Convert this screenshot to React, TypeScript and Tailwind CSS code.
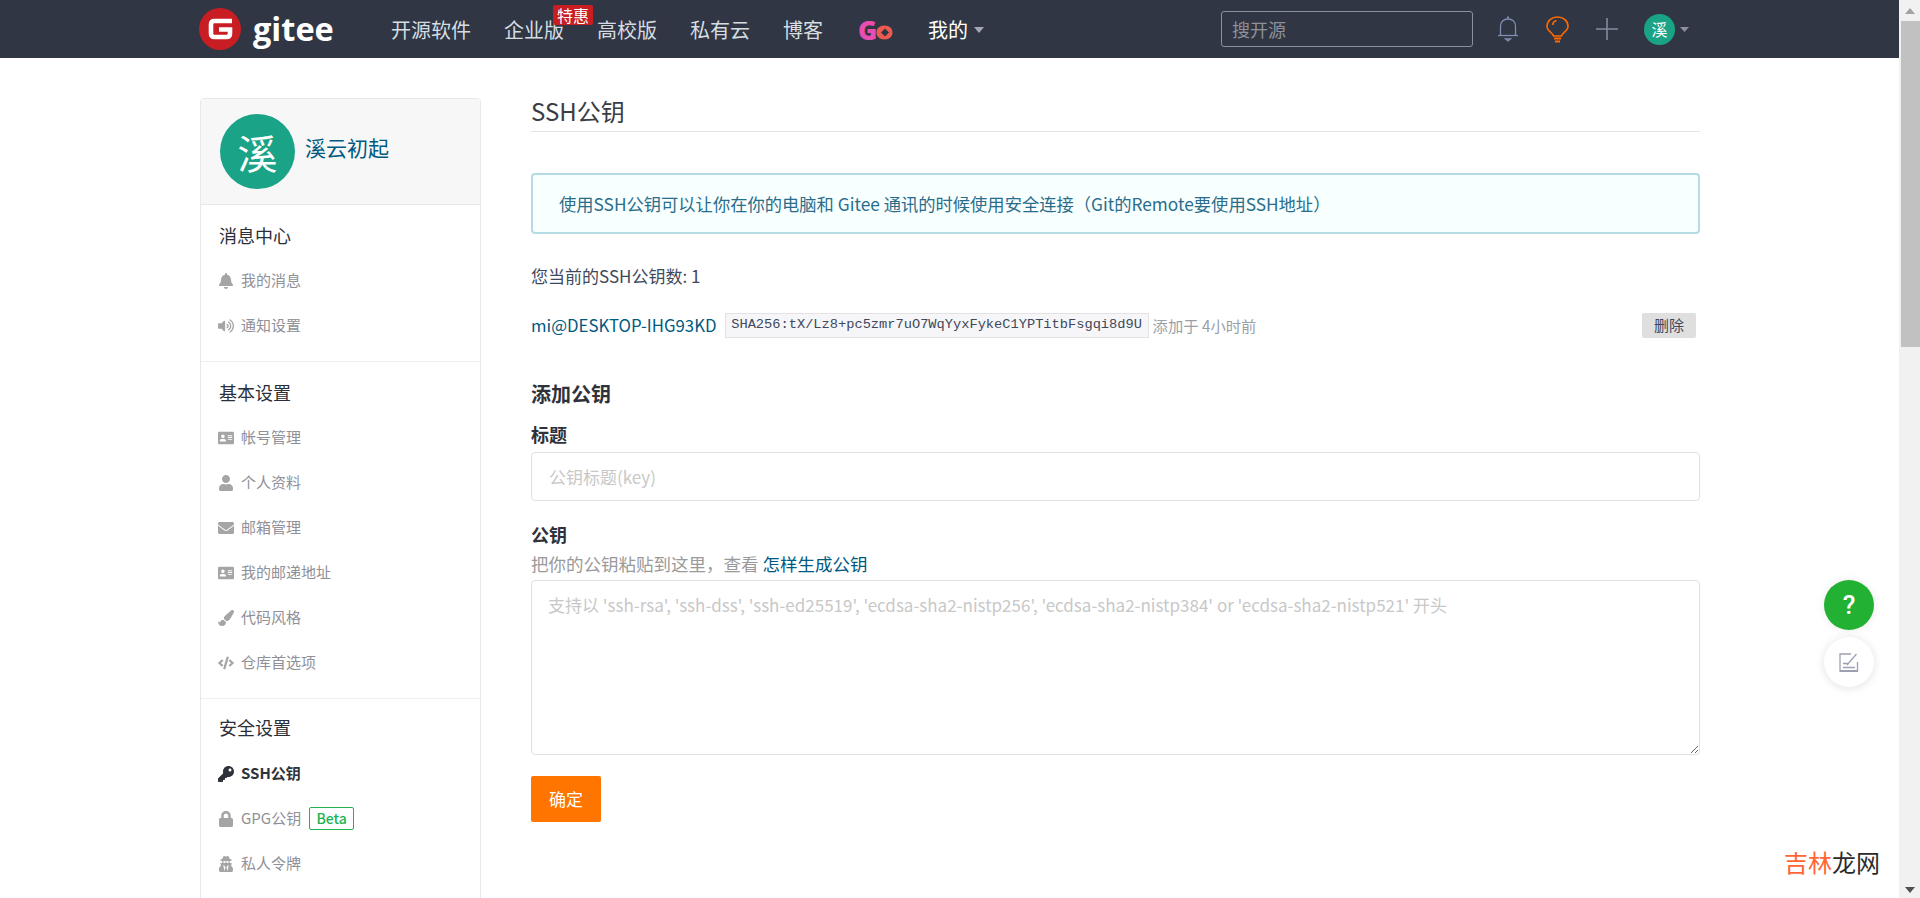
import type { ReactNode } from "react";
import {
  FaAddressCard,
  FaBell,
  FaCode,
  FaEnvelope,
  FaKey,
  FaLock,
  FaPaintBrush,
  FaUser,
  FaUserSecret,
  FaVolumeUp,
} from "react-icons/fa";

const cjk = "font-['Noto_Sans_CJK_SC','Noto_Sans',sans-serif]";

type NavItem = { icon: ReactNode; label: string; active?: boolean; beta?: boolean };
type NavGroup = { title: string; head: string; titleClass: string; items: NavItem[] };

const groups: NavGroup[] = [
  {
    title: "消息中心",
    head: "pt-[18px] pb-[13px]",
    titleClass: "mb-[11px] pl-[18px] text-[18px] leading-[24px] font-normal text-[#2c2f38]",
    items: [
      { icon: <FaBell />, label: "我的消息" },
      { icon: <FaVolumeUp />, label: "通知设置" },
    ],
  },
  {
    title: "基本设置",
    head: "border-t border-[#eef0f2] pt-[18px] pb-[13px]",
    titleClass: "mb-[11px] pl-[18px] text-[18px] leading-[24px] font-normal text-[#2c2f38]",
    items: [
      { icon: <FaAddressCard />, label: "帐号管理" },
      { icon: <FaUser />, label: "个人资料" },
      { icon: <FaEnvelope />, label: "邮箱管理" },
      { icon: <FaAddressCard />, label: "我的邮递地址" },
      { icon: <FaPaintBrush />, label: "代码风格" },
      { icon: <FaCode />, label: "仓库首选项" },
    ],
  },
  {
    title: "安全设置",
    head: "border-t border-[#eef0f2] pt-[16px] pb-[13px]",
    titleClass: "mb-[12px] pl-[18px] text-[18px] leading-[24px] font-normal text-[#2c2f38]",
    items: [
      { icon: <FaKey />, label: "SSH公钥", active: true },
      { icon: <FaLock />, label: "GPG公钥", beta: true },
      { icon: <FaUserSecret />, label: "私人令牌" },
    ],
  },
];

function GiteeMark() {
  return (
    <svg width="42" height="42" viewBox="0 0 42 42" className="shrink-0">
      <circle cx="21" cy="21" r="21" fill="#c71d23" />
      <path
        d="M33 13H15.5Q12 13 12 16.5V25.5Q12 29 15.5 29H27.5Q31 29 31 25.5V21.5H20"
        fill="none"
        stroke="#fff"
        strokeWidth="4.6"
      />
    </svg>
  );
}

function TopBar() {
  const links = ["开源软件", "企业版", "高校版", "私有云"];
  return (
    <header className="flex h-[58px] items-center bg-[#303643] pl-[199px]">
      <GiteeMark />
      <span className="ml-[12px] w-[85px] font-['Open_Sans',sans-serif] text-[32.5px] leading-none font-bold text-white">
        gitee
      </span>
      <nav className="mt-[2px] ml-[53px] flex items-center gap-[33px] text-[20px] text-[#d5dde2]">
        {links.map((l) => (
          <span key={l} className="relative whitespace-nowrap">
            {l}
            {l === "企业版" && (
              <span className="absolute top-[-10px] left-[49px] flex h-[20px] w-[40px] items-center justify-center rounded-[2px] bg-[#c71d23] text-[16px] text-white">
                特惠
              </span>
            )}
          </span>
        ))}
        <span className="whitespace-nowrap">博客</span>
        <span className="ml-[2px] flex w-[36px] items-center font-['Open_Sans',sans-serif] text-[26px] leading-none font-extrabold text-[#e94db0]">
          G
          <svg width="17" height="15" viewBox="0 0 17 15" className="mt-[4px] -ml-[1px] shrink-0">
            <path
              d="M8.5 .5C13.500 .5 16.500 3.500 16.500 7.500S13.500 14.500 8.500 14.500 .5 11.500 .5 7.500 3.500 .5 8.500 .5ZM9 3.500 5 7.500 9 11.500 13 7.500Z"
              fill="#ef5a50"
              fillRule="evenodd"
            />
          </svg>
        </span>
        <span className="ml-[1px] flex items-center whitespace-nowrap text-white">
          我的
          <svg width="10" height="6" viewBox="0 0 10 6" className="ml-[6px]">
            <path d="M0 0H10L5 6Z" fill="#a3a8b3" />
          </svg>
        </span>
      </nav>
      <div className="ml-auto flex items-center pr-[210px]">
        <div className="flex h-[36px] w-[252px] items-center rounded-[3px] border border-[#8a90a0] pl-[10px] text-[18px] text-[#8d919b]">
          搜开源
        </div>
        <svg width="22" height="26" viewBox="0 0 22 26" className="ml-[24px]" fill="none" stroke="#7f8db0" strokeWidth="1.3">
          <path d="M3.5 19V10.5C3.5 6 6.5 3 11 3S18.500 6 18.500 10.500V19" />
          <path d="M1 19.500H21" />
          <path d="M8.500 23H13.500L11 25Z" />
          <path d="M11 .5V2.500" strokeWidth="2" />
        </svg>
        <svg width="23" height="27" viewBox="0 0 23 27" className="ml-[27px]" fill="none" stroke="#ff6a00" strokeWidth="1.6">
          <path d="M7.500 20C7 17 1 15 1 10.500 1 5 5.500 1 11.500 1S22 5 22 10.500C22 15 16 17 15.500 20Z" />
          <path d="M6.500 9C7 6.500 8.500 5 10.500 4.500" />
          <path d="M8 22.500H15M9 25.500H14" strokeWidth="1.8" />
        </svg>
        <svg width="22" height="22" viewBox="0 0 22 22" className="ml-[27px]" stroke="#848b9c" strokeWidth="1.6">
          <path d="M11 0V22M0 11H22" />
        </svg>
        <span className="ml-[26px] flex h-[31px] w-[31px] items-center justify-center rounded-full bg-[#1aa386] text-[16px] text-white">
          溪
        </span>
        <svg width="9" height="5" viewBox="0 0 9 5" className="ml-[5px]">
          <path d="M0 0H9L4.500 5Z" fill="#8d919b" />
        </svg>
      </div>
    </header>
  );
}

function Sidebar() {
  return (
    <aside className="w-[281px] shrink-0 rounded-[4px] border border-[#e3e9ed] pb-[40px]">
      <div className="flex h-[106px] items-center border-b border-[#e3e9ed] bg-[#f7f7f7] pl-[19px]">
        <span className="flex h-[75px] w-[75px] items-center justify-center rounded-full bg-[#1aa386] text-[40px] text-white">
          溪
        </span>
        <span className="mb-[8px] ml-[10px] text-[21px] text-[#005980]">溪云初起</span>
      </div>
      {groups.map((g) => (
        <section key={g.title} className={g.head}>
          <h3 className={g.titleClass}>{g.title}</h3>
          {g.items.map((it) => (
            <div
              key={it.label}
              className={
                it.active
                  ? "flex h-[45px] items-center pl-[17px] text-[15px] font-bold text-[#2f323a]"
                  : "flex h-[45px] items-center pl-[17px] text-[15px] text-[#8f9098]"
              }
            >
              <span className={it.active ? "flex w-[16px] justify-center text-[16px] text-[#2f323a]" : "flex w-[16px] justify-center text-[16px] text-[#a5a5a5]"}>
                {it.icon}
              </span>
              <span className="ml-[7px]">{it.label}</span>
              {it.beta && (
                <span className="ml-[8px] flex h-[23px] w-[45px] items-center justify-center rounded-[2px] border border-[#21b351] text-[14px] font-medium text-[#21b351]">
                  Beta
                </span>
              )}
            </div>
          ))}
        </section>
      ))}
    </aside>
  );
}

function SshPanel() {
  return (
    <main className="ml-[50px] w-[1169px] shrink-0 text-[16.8px] text-[#40485b]">
      <h2 className="h-[33px] pb-[7px] text-[24px] leading-[26px] font-normal text-[#3a3d44]">SSH公钥</h2>
      <div className="h-px bg-[#e3e5e8]" />
      <div className="mt-[41px] flex h-[61px] items-center rounded-[4px] border-2 border-[#b5dbe5] bg-[#f7ffff] pl-[26px] text-[17.3px] text-[#2a6d8b]">
        使用SSH公钥可以让你在你的电脑和 Gitee 通讯的时候使用安全连接（Git的Remote要使用SSH地址）
      </div>
      <p className="mt-[30px] text-[17px] leading-[24px]">您当前的SSH公钥数: 1</p>
      <div className="mt-[25px] flex h-[25px] items-center">
        <span className="text-[#005980]">mi@DESKTOP-IHG93KD</span>
        <code className="ml-[8px] flex h-[25px] w-[424px] items-center justify-center border border-[#e3e3e6] bg-[#f6f6f8] font-['Liberation_Mono',monospace] text-[13.7px] text-[#40485b]">
          SHA256:tX/Lz8+pc5zmr7uO7WqYyxFykeC1YPTitbFsgqi8d9U
        </code>
        <span className="ml-[4px] text-[15.3px] text-[#9b9fa9]">添加于 4小时前</span>
        <button className="mr-[4px] ml-auto h-[25px] w-[54px] rounded-[2px] bg-[#dfdfdf] text-[15px] text-[#40485b]">
          删除
        </button>
      </div>
      <h3 className="mt-[42px] text-[20px] leading-[28px] font-bold text-[#2f323a]">添加公钥</h3>
      <label className="mt-[14px] block text-[18px] leading-[24px] font-bold text-[#2f323a]">标题</label>
      <input
        placeholder="公钥标题(key)"
        className="mt-[6px] block h-[49px] w-full rounded-[4px] border border-[#e0e0e8] px-[17px] text-[17px] outline-none placeholder:text-[#c8c8c8]"
      />
      <label className="mt-[21px] block text-[18px] leading-[24px] font-bold text-[#2f323a]">公钥</label>
      <p className="mt-[6px] text-[17.5px] leading-[24px] text-[#9a9a9a]">
        把你的公钥粘贴到这里，查看 <span className="text-[#005980]">怎样生成公钥</span>
      </p>
      <textarea
        placeholder="支持以 'ssh-rsa', 'ssh-dss', 'ssh-ed25519', 'ecdsa-sha2-nistp256', 'ecdsa-sha2-nistp384' or 'ecdsa-sha2-nistp521' 开头"
        className="mt-[4px] block h-[175px] w-full rounded-[4px] border border-[#e0e0e8] px-[16px] py-[12px] text-[17px] leading-[24px] outline-none placeholder:text-[#c8c8c8]"
      />
      <button className="mt-[21px] h-[46px] w-[70px] rounded-[2px] bg-[#ff7500] text-[17px] text-white">确定</button>
    </main>
  );
}

function FloatingTools() {
  return (
    <div className="absolute top-[580px] right-[25px] flex flex-col gap-[7px]">
      <span className="flex h-[50px] w-[50px] items-center justify-center rounded-full bg-[#22b132] font-['Roboto',sans-serif] text-[26px] font-medium text-white shadow-[0_0_10px_rgba(0,0,0,0.08)]">
        ?
      </span>
      <span className="flex h-[50px] w-[50px] items-center justify-center rounded-full bg-white shadow-[0_1px_10px_rgba(0,0,0,0.12)]">
        <svg width="20" height="19" viewBox="0 0 20 19" fill="none" stroke="#9da0b3" strokeWidth="1.3">
          <path d="M12 1H1V18H18.500V9" />
          <path d="M8 12 17.500 1" />
          <path d="M4 10.500H9M4 14.500H16" />
          <path d="M1 18H19" strokeWidth="2" />
        </svg>
      </span>
    </div>
  );
}

function FakeScrollbar() {
  return (
    <div className="flex h-full w-[21px] shrink-0 flex-col bg-[#f1f1f1]">
      <div className="flex h-[21px] items-center justify-center">
        <svg width="10" height="6" viewBox="0 0 10 6">
          <path d="M5 0 10 6H0Z" fill="#a3a3a3" />
        </svg>
      </div>
      <div className="ml-[2px] h-[326px] bg-[#c1c1c1]" />
      <div className="flex-1" />
      <div className="flex h-[17px] items-center justify-center">
        <svg width="10" height="6" viewBox="0 0 10 6">
          <path d="M0 0H10L5 6Z" fill="#505050" />
        </svg>
      </div>
    </div>
  );
}

export default function App() {
  return (
    <div className={`flex h-[898px] overflow-hidden bg-white ${cjk}`}>
      <div className="relative min-w-0 flex-1">
        <TopBar />
        <div className="flex pt-[40px] pl-[200px]">
          <Sidebar />
          <SshPanel />
        </div>
        <FloatingTools />
        <div className="absolute top-[847px] right-[19px] text-[24px] leading-[30px] whitespace-nowrap text-[#2b2b2b]">
          <span className="text-[#ff6633]">吉林</span>龙网
        </div>
      </div>
      <FakeScrollbar />
    </div>
  );
}
